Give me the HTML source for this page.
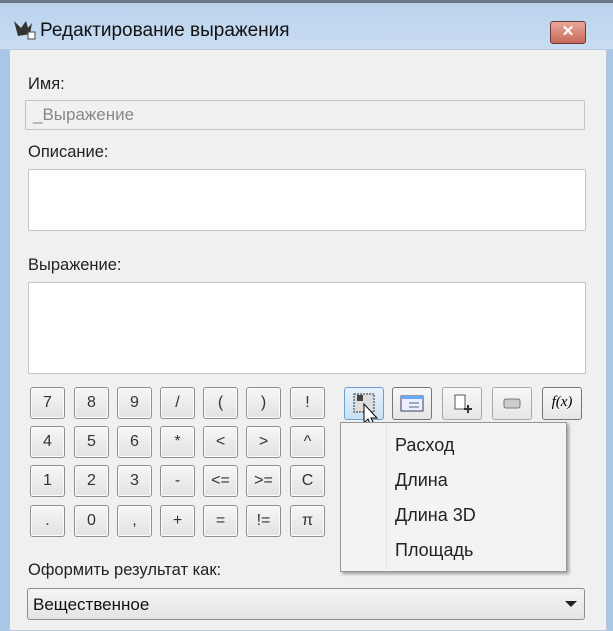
<!DOCTYPE html><html><head><style>
body{margin:0;width:613px;height:624px;overflow:hidden;background:#a9c6e6;font-family:"Liberation Sans",sans-serif;position:relative}
.a{position:absolute}
.client{left:9px;top:49px;width:596px;height:580px;background:#f0f0f0;border:1px solid #b8c8d8}
.lbl{font-size:16.5px;color:#222}
.box{background:#fff;border:1px solid #c4c4c4;border-radius:2px}
.b{width:33px;height:30px;border:1px solid #8e8f8f;border-radius:3px;background:linear-gradient(#f6f6f6,#e2e2e2);box-shadow:inset 0 0 0 1px #fcfcfc;font-size:16px;color:#333;text-align:center;line-height:30px}
.t{width:38px;height:31px;border:1px solid #a8a8a8;border-radius:3px;background:linear-gradient(#f8f8f8,#e6e6e6)}
.mi{left:395px;font-size:18px;color:#222}
</style></head><body>
<div class="a" style="left:0;top:0;width:613px;height:3px;background:#6c7a88"></div>
<div class="a" style="left:0;top:3px;width:613px;height:46px;background:linear-gradient(#b9d2ec,#c9ddf2)"></div>
<svg class="a" style="left:12px;top:18px" width="24" height="22"><path d="M2 3 L9 10 L14 3 L16 10 L20 5 L18 16 L6 18 Z" fill="#333"/><rect x="16" y="14" width="7" height="7" fill="#fff" stroke="#444"/></svg>
<div class="a" style="left:40px;top:20px;font-size:19px;color:#111">Редактирование выражения</div>
<div class="a" style="left:550px;top:21px;width:34px;height:21px;border:1px solid #6b3a36;border-radius:3px;background:linear-gradient(#e9a89a,#c86a5a);color:#fff;font-weight:bold;text-align:center;font-size:15px;line-height:20px">✕</div>
<div class="a client"></div>
<div class="a lbl" style="left:28px;top:75px">Имя:</div>
<div class="a" style="left:25px;top:100px;width:558px;height:28px;border:1px solid #c4c4c4;border-radius:2px;background:#f1f1f1"></div>
<div class="a" style="left:33px;top:105px;font-size:17px;color:#888">_Выражение</div>
<div class="a lbl" style="left:28px;top:143px">Описание:</div>
<div class="a box" style="left:28px;top:169px;width:556px;height:60px"></div>
<div class="a lbl" style="left:28px;top:256px">Выражение:</div>
<div class="a box" style="left:28px;top:282px;width:556px;height:90px"></div>
<div class="a t" style="left:344px;top:387px;border-color:#6fa0d0;background:linear-gradient(#e6f2fc,#c8e0f4)"><svg width="38" height="31"><rect x="9" y="6" width="20" height="18" fill="#ddd" stroke="#333" stroke-dasharray="2 1"/><rect x="12" y="7" width="6" height="6" fill="#444"/></svg></div>
<div class="a t" style="left:392px;top:387px;border-color:#777"><svg width="38" height="31"><rect x="8" y="8" width="22" height="15" fill="#eef" stroke="#345"/><rect x="8" y="8" width="22" height="3" fill="#6af"/><line x1="16" y1="15" x2="26" y2="15" stroke="#467"/><line x1="16" y1="19" x2="26" y2="19" stroke="#467"/></svg></div>
<div class="a t" style="left:442px;top:387px"><svg width="38" height="31"><rect x="12" y="7" width="10" height="14" fill="#fff" stroke="#555"/><path d="M25 17v8M21 21h8" stroke="#333" stroke-width="2"/></svg></div>
<div class="a t" style="left:492px;top:387px"><svg width="38" height="31"><rect x="11" y="11" width="16" height="9" rx="2" fill="#ccc" stroke="#777"/></svg></div>
<div class="a t" style="left:542px;top:387px;border-color:#777"><div style="font-style:italic;font-family:'Liberation Serif';font-size:15px;text-align:center;line-height:28px">f(x)</div></div>
<svg class="a" style="left:363px;top:403px" width="18" height="30"><path d="M1 1 L1 20 L5 16 L9 25 L12 23 L8 15 L14 15 Z" fill="#fff" stroke="#000"/></svg>
<div class="a" style="left:340px;top:422px;width:225px;height:148px;background:#f3f3f3;border:1px solid #979797;box-shadow:2px 2px 3px rgba(0,0,0,.35)"></div>
<div class="a" style="left:386px;top:424px;width:1px;height:145px;background:#e6e6e6"></div>
<div class="a mi" style="top:435px">Расход</div>
<div class="a mi" style="top:470px">Длина</div>
<div class="a mi" style="top:505px">Длина 3D</div>
<div class="a mi" style="top:540px">Площадь</div>
<div class="a lbl" style="left:28px;top:561px">Оформить результат как:</div>
<div class="a" style="left:27px;top:588px;width:556px;height:30px;border:1px solid #8e8f8f;border-radius:3px;background:linear-gradient(#f4f4f4,#e4e4e4)"></div>
<div class="a" style="left:33px;top:595px;font-size:17px;color:#111">Вещественное</div>
<div class="a" style="left:565px;top:601px;width:0;height:0;border-left:6px solid transparent;border-right:6px solid transparent;border-top:6px solid #222"></div>
<div class="a" style="left:30px;top:387px">
<div class="a b" style="left:0;top:0">7</div><div class="a b" style="left:44px;top:0">8</div><div class="a b" style="left:87px;top:0">9</div><div class="a b" style="left:130px;top:0">/</div><div class="a b" style="left:173px;top:0">(</div><div class="a b" style="left:216px;top:0">)</div><div class="a b" style="left:260px;top:0">!</div>
<div class="a b" style="left:0;top:39px">4</div><div class="a b" style="left:44px;top:39px">5</div><div class="a b" style="left:87px;top:39px">6</div><div class="a b" style="left:130px;top:39px">*</div><div class="a b" style="left:173px;top:39px">&lt;</div><div class="a b" style="left:216px;top:39px">&gt;</div><div class="a b" style="left:260px;top:39px">^</div>
<div class="a b" style="left:0;top:78px">1</div><div class="a b" style="left:44px;top:78px">2</div><div class="a b" style="left:87px;top:78px">3</div><div class="a b" style="left:130px;top:78px">-</div><div class="a b" style="left:173px;top:78px">&lt;=</div><div class="a b" style="left:216px;top:78px">&gt;=</div><div class="a b" style="left:260px;top:78px">C</div>
<div class="a b" style="left:0;top:118px">.</div><div class="a b" style="left:44px;top:118px">0</div><div class="a b" style="left:87px;top:118px">,</div><div class="a b" style="left:130px;top:118px">+</div><div class="a b" style="left:173px;top:118px">=</div><div class="a b" style="left:216px;top:118px">!=</div><div class="a b" style="left:260px;top:118px">π</div>
</div>
</body></html>
